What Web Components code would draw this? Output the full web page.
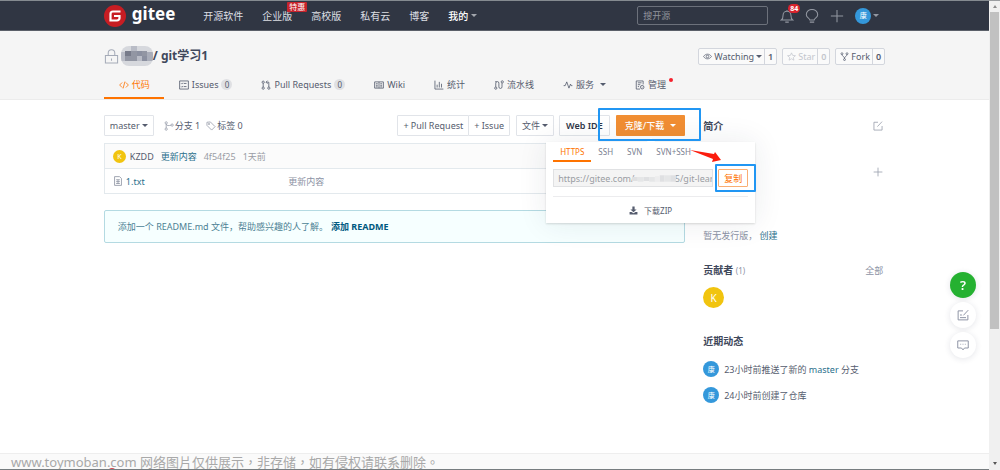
<!DOCTYPE html>
<html lang="zh-CN">
<head>
<meta charset="utf-8">
<meta name="viewport" content="width=device-width, initial-scale=1">
<title>git学习1 - Gitee</title>
<style>
  html, body { margin: 0; height: 100%; }
  body {
    font: 9px/13px "Noto Sans", "Noto Sans CJK SC", sans-serif;
    color: #555c6e;
    background: #fff;
    overflow: hidden;
  }
</style>
</head>
<body>
<gitee-app></gitee-app>
<script>
const RESET = `
  *, *::before, *::after { box-sizing: border-box; }
  :host([hidden]) { display: none; }
  a { color: inherit; text-decoration: none; }
  button, input { font: inherit; color: inherit; margin: 0; border-radius: 0; }
  button { cursor: pointer; }
  h1, h2, p, ul { margin: 0; padding: 0; font: inherit; }
  ul { list-style: none; }
`;

function define(name, css, html, setup) {
  const template = document.createElement('template');
  template.innerHTML = `<style>${RESET}${css}</style>${html}`;
  customElements.define(name, class extends HTMLElement {
    constructor() {
      super();
      this.attachShadow({ mode: 'open' }).append(template.content.cloneNode(true));
    }
    connectedCallback() { if (setup) setup(this, this.shadowRoot); }
  });
}

/* ---------- icons ---------- */
const ICONS = {
  lock: '<path d="M1.500 7h13v8h-13zM4.500 7V4.200a3.500 3.500 0 0 1 7 0V7M8 10v2.500"/>',
  code: '<path d="M5 4 1 8l4 4M11 4l4 4-4 4M9.500 2.500l-3 11"/>',
  issue: '<path d="M1 1.500h14v13H1zM7.500 5.500H12M7.500 10.500H12M3.500 5.500l1 1 1.500-2M3.500 10.500l1 1 1.500-2"/>',
  pull: '<circle cx="3.500" cy="3.500" r="1.800"/><circle cx="3.500" cy="13" r="1.800"/><circle cx="12.500" cy="13" r="1.800"/><path d="M3.500 5.300v5.900M12.500 11.200V3.500H8.500M10.500 1 8 3.500 10.500 6"/>',
  wiki: '<path d="M1 3h14v10H1zM8 3v10M3 6h3M3 8.500h3M10 6h3M10 8.500h3M3 11h3M10 11h3"/>',
  chart: '<path d="M1.500 1v13.500H15M5 12V7.500M8.500 12V3M12 12V6"/>',
  pipe: '<circle cx="2.800" cy="13" r="1.800"/><circle cx="13.200" cy="3" r="1.800"/><path d="M2.800 11V5a2.500 2.500 0 0 1 5 0v6a2.500 2.500 0 0 0 5 0V5M2 2.500h2"/>',
  pulse: '<path d="M1 9h2.500L6 3l3.500 10L12 6.500 13 9h2"/>',
  manage: '<path d="M13 7V1.500H2v13h6M4.500 4.500h6M4.500 7.500h4M4.500 10.500h2"/><circle cx="11.500" cy="11.500" r="2.800"/><path d="M11.500 11v1"/>',
  eye: '<path d="M1 8c3.500-5.500 10.500-5.500 14 0-3.500 5.500-10.500 5.500-14 0z"/><circle cx="8" cy="8" r="2.300"/>',
  star: '<path d="m8 1.500 2 4.500 5 .5-3.700 3.300 1 4.700L8 12l-4.300 2.500 1-4.700L1 6.500 6 6z"/>',
  fork: '<circle cx="3.500" cy="3" r="1.700"/><circle cx="12.500" cy="3" r="1.700"/><circle cx="8" cy="13.500" r="1.700"/><path d="M3.500 4.700C3.500 8 8 7 8 11.800M12.500 4.700C12.500 8 8 7 8 11.800"/>',
  branch: '<circle cx="3.500" cy="3" r="1.800"/><circle cx="3.500" cy="13" r="1.800"/><circle cx="13" cy="6.500" r="1.800"/><path d="M3.500 4.800v6.400M3.500 5c1 3 4 2.500 7.700 1.800"/>',
  tag: '<path d="M1.500 2v5l7.500 7.500 5.500-5.500L7 1.500z"/><circle cx="4.800" cy="4.800" r="1"/>',
  file: '<path d="M2.500 1h8l3 3v11h-11zM5 6h6M5 9h6M5 12h6M8 6v6"/>',
  bell: '<path d="M1.500 12.500c1.500-1 2-1.500 2-5.500a4.500 4.500 0 0 1 9 0c0 4 .5 4.500 2 5.500zM8 1v1.500M6 15h4"/>',
  bulb: '<path d="M5.500 12.500C5.500 10.500 1.500 10 1.500 6.500a6.500 6 0 0 1 13 0c0 3.500-4 4-4 6zM5.500 15h5"/>',
  plus: '<path d="M8 1v14M1 8h14"/>',
  edit: '<path d="M8 2H1.500v12.500h13V8M7 9l7.500-8"/>',
  note: '<path d="M8 2.500H1.500v12h13V8M8.500 8.500l6.500-7M4 8h2.500M4 11.500h8"/>',
  chat: '<path d="M1 2.500h14v9.500h-5l-2 2.500L6 12H1zM4.500 7h1M7.500 7h1M10.500 7h1"/>',
  download: '<path fill="currentColor" stroke="none" d="M6 1h4v5h3.500L8 11 2.500 6H6zM1 10.500h3.500L8 13l3.500-2.500H15V15H1z"/>'
};
define('ui-icon', `
  :host { display: inline-flex; flex: none; width: var(--size, 10px); height: var(--size, 10px); }
  svg { width: 100%; height: 100%; fill: none; stroke: currentColor; stroke-width: var(--stroke, 1.3); }
`, '<svg viewBox="0 0 16 16" aria-hidden="true"></svg>', (el, root) => {
  root.querySelector('svg').innerHTML = ICONS[el.getAttribute('name')];
});

define('ui-caret', `
  :host { display: inline-block; flex: none; border: 3px solid transparent; border-top-color: currentColor; border-bottom: 0; }
`, '');

define('user-avatar', `
  :host { display: inline-flex; flex: none; align-items: center; justify-content: center;
    width: var(--size, 16px); height: var(--size, 16px); border-radius: 50%;
    background: var(--tone, #3498db); color: #fff; font-size: var(--letter, 7px); line-height: 1; }
`, '<slot></slot>');

/* A blue frame drawn over whatever is slotted in. */
define('mark-frame', `
  :host { display: flex; position: relative; }
  i { position: absolute; inset: var(--reach, -4px); border: 2px solid #2196f3; border-radius: 1px; pointer-events: none; z-index: 6; }
`, '<slot></slot><i></i>');

/* ---------- top bar ---------- */
define('site-nav', `
  :host { display: block; background: #303643; border-top: 1px solid #858b90; border-bottom: 1px solid #5b6069; color: #ced1d6; }
  nav { display: flex; align-items: center; height: 29px; width: var(--wrap); margin: 0 auto; }
  .logo { display: flex; align-items: center; gap: 6px; color: #fff; font-weight: 700; font-size: 17px; line-height: 24px; margin-right: 28px; }
  .logo svg { width: 22px; height: 22px; }
  .logo span { padding-bottom: 3px; }
  ul { display: flex; gap: 19px; font-size: 10px; line-height: 16px; color: #dcdfe3; }
  li { position: relative; }
  .mine { display: flex; align-items: center; gap: 3px; font-weight: 500; color: #fff; }
  .mine ui-caret { color: #a3a7ae; }
  .hot { position: absolute; left: 25px; top: -6px; padding: 0 2px; background: #c7232c; color: #fff; font-size: 8px; line-height: 10px; border-radius: 1px; white-space: nowrap; }
  .tools { display: flex; align-items: center; margin-left: auto; margin-right: 6px; gap: 11px; color: #9297a1; }
  input { width: 131px; height: 19px; padding: 0 5px; background: transparent; border: 1px solid #6c717b; border-radius: 2px; color: #fff; margin-right: 1px; }
  input::placeholder { color: #90949c; opacity: 1; }
  .tools button, .tools a { display: flex; align-items: center; padding: 0; border: 0; background: none; position: relative; }
  .tools ui-icon { --size: 14px; --stroke: 1.2; }
  .tools .me { gap: 2px; }
  .count { position: absolute; left: 8px; top: -5px; padding: 0 2px; border-radius: 5px; background: #d9232d; color: #fff; font-size: 7px; line-height: 9px; font-weight: 700; }
`, `
  <nav>
    <a class="logo" href="#"><svg viewBox="0 0 22 22" aria-hidden="true"><circle cx="11" cy="11" r="11" fill="#c71d23"/><path d="M16.500 6.500H9a2.500 2.500 0 0 0-2.500 2.500v6.500H13a2.500 2.500 0 0 0 2.500-2.500v-2H10" fill="none" stroke="#fff" stroke-width="2.200"/></svg><span>gitee</span></a>
    <ul>
      <li><a href="#">开源软件</a></li>
      <li><a href="#">企业版</a><span class="hot">特惠</span></li>
      <li><a href="#">高校版</a></li>
      <li><a href="#">私有云</a></li>
      <li><a href="#">博客</a></li>
      <li><a class="mine" href="#">我的<ui-caret></ui-caret></a></li>
    </ul>
    <div class="tools">
      <input type="search" placeholder="搜开源" aria-label="搜开源">
      <a href="#" aria-label="通知"><ui-icon name="bell"></ui-icon><span class="count">84</span></a>
      <a href="#" aria-label="提示"><ui-icon name="bulb"></ui-icon></a>
      <button aria-label="新建"><ui-icon name="plus"></ui-icon></button>
      <button class="me" aria-label="账户"><user-avatar>康</user-avatar><ui-caret></ui-caret></button>
    </div>
  </nav>
`);

/* ---------- repository header ---------- */
define('stat-button', `
  :host { display: flex; height: 17px; background: #fafafa; border: 1px solid #d3d6dd; border-radius: 2px; }
  :host([muted]) { color: #c3c6cd; }
  button { display: flex; align-items: center; gap: 2px; padding: 0 2px 0 4px; border: 0; background: none; }
  a { display: flex; align-items: center; padding: 0 3px; border-left: 1px solid #d3d6dd; font-weight: 600; }
  ui-icon { --size: 9px; }
`, '<button><ui-icon></ui-icon><slot></slot></button><a href="#"></a>', (el, root) => {
  const icon = document.createElement('ui-icon');
  icon.setAttribute('name', el.getAttribute('icon'));
  root.querySelector('ui-icon').replaceWith(icon);
  root.querySelector('a').textContent = el.getAttribute('count');
  root.querySelector('button').disabled = el.hasAttribute('muted');
}
);

define('repo-tab', `
  :host { display: block; }
  a { display: flex; align-items: center; gap: 3px; height: 30px; padding: 3px 14px 0 15px; border-bottom: 2px solid transparent; white-space: nowrap; }
  :host([active]) a { color: #fe7300; border-color: #fe7300; }
  b { min-width: 11px; padding: 0 3px; border-radius: 6px; background: #dfe0e3; font-weight: 400; font-size: 8px; line-height: 11px; text-align: center; }
  ui-caret { margin-left: 3px; }
  i { width: 4px; height: 4px; border-radius: 50%; background: #f5222d; align-self: flex-start; margin-top: 6px; }
`, '<a href="#"></a>', (el, root) => {
  const extra = { caret: '<ui-caret></ui-caret>', dot: '<i></i>' }[el.getAttribute('extra')] || '';
  const count = el.hasAttribute('count') ? `<b>${el.getAttribute('count')}</b>` : '';
  root.querySelector('a').innerHTML = `<ui-icon name="${el.getAttribute('icon')}"></ui-icon><slot></slot>${count}${extra}`;
});

define('repo-header', `
  :host { display: block; background: #f5f5f5; border-bottom: 1px solid #ececec; }
  .wrap { width: var(--wrap); margin: 0 auto; padding-top: 15px; }
  .title { display: flex; align-items: center; height: 20px; }
  h1 { display: flex; align-items: center; font-size: 12px; line-height: 20px; font-weight: 700; color: #40485b; }
  h1 ui-icon { --size: 15px; --stroke: 1.1; color: #a5abb8; margin-right: 2px; }
  h1 svg { width: 32px; height: 20px; }
  .stats { display: flex; gap: 5px; margin-left: auto; }
  .tabs { display: flex; margin-top: 3px; }
`, `
  <div class="wrap">
    <div class="title">
      <h1><ui-icon name="lock"></ui-icon>
        <svg viewBox="0 0 32 20" aria-hidden="true">
          <clipPath id="blob"><rect width="32" height="20" rx="8"/></clipPath>
          <g clip-path="url(#blob)"><rect width="32" height="20" fill="#d6d8dd"/>
          <path fill="#b9bcc6" d="M0 6h5v9H0zM10 0h6v5h-6zM16 10h5v5h-5z"/><path fill="#777b8a" d="M4 5h6v5H4z"/><path fill="#9296a3" d="M10 5h6v10h-6zM4 10h6v5H4zM21 5h5v5h-5z"/><path fill="#8b90a0" d="M16 5h5v5h-5zM21 10h5v5h-5z"/><path fill="#a9adb9" d="M26 6h6v9h-6z"/></g>
        </svg>/ git学习1</h1>
      <div class="stats">
        <stat-button icon="eye" count="1">Watching<ui-caret></ui-caret></stat-button>
        <stat-button icon="star" count="0" muted>Star</stat-button>
        <stat-button icon="fork" count="0">Fork</stat-button>
      </div>
    </div>
    <nav class="tabs">
      <repo-tab icon="code" active>代码</repo-tab>
      <repo-tab icon="issue" count="0">Issues</repo-tab>
      <repo-tab icon="pull" count="0">Pull Requests</repo-tab>
      <repo-tab icon="wiki">Wiki</repo-tab>
      <repo-tab icon="chart">统计</repo-tab>
      <repo-tab icon="pipe">流水线</repo-tab>
      <repo-tab icon="pulse" extra="caret">服务</repo-tab>
      <repo-tab icon="manage" extra="dot">管理</repo-tab>
    </nav>
  </div>
`);

/* ---------- clone drop-down ---------- */
define('clone-menu', `
  :host { display: block; position: relative; }
  .open { display: flex; align-items: center; gap: 6px; height: 21px; padding: 0 9px; border: 0; border-radius: 1px; background: #f18e33; color: #fff; font-weight: 500; }
  mark-frame.big { --reach: -7px -16px -5px -18px; }
  .panel { position: absolute; z-index: 4; top: 27px; right: -70px; width: 209px; padding: 0 7px; background: #fff; box-shadow: 0 1px 2px rgba(0,0,0,.14), 0 0 30px rgba(30,40,70,.09); }
  .panel::before { content: ""; position: absolute; top: -3px; left: 102px; width: 6px; height: 6px; background: #fff; transform: rotate(45deg); }
  .kinds { display: flex; height: 19px; font-size: 8px; line-height: 20px; color: #7a8090; }
  .kinds a { padding: 0 7px; height: 20px; border-bottom: 2px solid transparent; }
  .kinds .on { color: #fe7300; border-color: #fe7300; }
  .url { display: flex; gap: 5px; padding: 8px 0 9px; position: relative; border-bottom: 1px solid #ececee; }
  .field { flex: 1; min-width: 0; position: relative; }
  input { width: 100%; height: 18px; display: block; padding: 0 0 0 4px; border: 1px solid #e0e1e3; background: #f4f4f4; color: #9a9da3; }
  .smudge { position: absolute; left: 79px; top: 4px; width: 44px; height: 11px; }
  .copy { height: 18px; width: 30px; padding: 0; border: 1px solid #f9ae74; border-radius: 1px; background: #fff; color: #fe7300; }
  mark-frame.small { --reach: -5px -8px -5px -3px; }
  .arrow { position: absolute; left: 137px; top: -11px; width: 31px; height: 12px; z-index: 7; }
  .zip { display: flex; align-items: center; justify-content: center; gap: 6px; height: 26px; font-size: 8px; }
  .zip ui-icon { --size: 9px; }
`, `
  <mark-frame class="big"><button class="open" aria-expanded="true">克隆/下载<ui-caret></ui-caret></button></mark-frame>
  <div class="panel">
    <nav class="kinds"><a class="on" href="#">HTTPS</a><a href="#">SSH</a><a href="#">SVN</a><a href="#">SVN+SSH</a></nav>
    <div class="url">
      <div class="field">
        <input readonly aria-label="仓库地址" value="https://gitee.com/&#8195;&#8195;&#8195;&#8195;&#8194;5/git-learn">
        <svg class="smudge" viewBox="0 0 46 11" aria-hidden="true"><path fill="#dfe0e2" d="M0 4h6v4H0zM12 4h6v4h-6zM29 2h5v7h-5zM40 2h6v7h-6z"/><path fill="#e5e6e7" d="M6 4h6v5H6zM18 4h6v5h-6zM34 2h6v7h-6z"/><path fill="#ededee" d="M24 3h5v6h-5z"/></svg>
      </div>
      <mark-frame class="small"><button class="copy">复制</button></mark-frame>
      <svg class="arrow" viewBox="0 0 31 12" aria-hidden="true"><path fill="#fb1d0e" d="M0 0 24 4l1-2 6 8-9 2 1-3z"/></svg>
    </div>
    <a class="zip" href="#"><ui-icon name="download"></ui-icon>下载ZIP</a>
  </div>
`);

/* ---------- code column ---------- */
define('repo-toolbar', `
  :host { display: flex; align-items: center; height: 21px; gap: 6px; }
  button { display: flex; align-items: center; gap: 2px; height: 21px; padding: 0 5px; background: #fff; border: 1px solid #e1e4e9; border-radius: 1px; white-space: nowrap; }
  button + button { margin-left: -1px; }
  a { display: flex; align-items: center; gap: 1px; }
  .refs { display: flex; gap: 6px; margin: 0 auto 0 4px; }
  .refs ui-icon { color: #9a9fac; }
  .pair { display: flex; }
  .ide { font-weight: 600; color: #2e3547; padding: 0 6px; }
`, `
  <button>master<ui-caret></ui-caret></button>
  <div class="refs"><a href="#"><ui-icon name="branch"></ui-icon>分支 1</a><a href="#"><ui-icon name="tag"></ui-icon>标签 0</a></div>
  <div class="pair"><button>+ Pull Request</button><button>+ Issue</button></div>
  <button>文件<ui-caret></ui-caret></button>
  <button class="ide">Web IDE</button>
  <clone-menu></clone-menu>
`);

define('file-list', `
  :host { display: block; }
  table { width: 100%; border-collapse: collapse; border: 1px solid #e3e9ed; table-layout: fixed; }
  th, td { height: 25px; padding: 0 0 0 8px; text-align: left; font-weight: 400; }
  thead { background: #fbfbfb; border-bottom: 1px solid #e3e9ed; }
  div { display: flex; align-items: center; }
  .last { gap: 7px; color: #9a9da5; }
  .author { display: flex; align-items: center; gap: 4px; color: #555c6e; }
  .link { color: #2a6f8c; }
  .name { gap: 3px; color: #2a6f8c; }
  .name ui-icon { color: #8d93a1; }
  td + td { color: #8c92a4; padding: 0; }
`, `
  <table>
    <colgroup><col style="width: 184px"><col></colgroup>
    <thead><tr><th colspan="2"><div class="last"><a class="author" href="#"><user-avatar style="--size: 13px; --tone: #f1c40f">K</user-avatar>KZDD</a><a class="link" href="#">更新内容</a><a href="#">4f54f25</a><span>1天前</span></div></th></tr></thead>
    <tbody><tr><td><div class="name"><ui-icon name="file"></ui-icon><a href="#">1.txt</a></div></td><td>更新内容</td></tr></tbody>
  </table>
`);

define('readme-tip', `
  :host { display: block; padding: 9px 13px; background: #f6ffff; border: 1px solid #b4dae2; border-radius: 2px; color: #4c7f94; }
  a { color: #005980; font-weight: 700; margin-left: 3px; }
`, '<p>添加一个 README.md 文件，帮助感兴趣的人了解。<a href="#">添加 README</a></p>');

/* ---------- sidebar ---------- */
define('side-section', `
  :host { display: block; }
  header { display: flex; align-items: center; justify-content: space-between; height: 18px; }
  h2 { font-size: 10px; line-height: 18px; font-weight: 700; color: #40485b; }
`, '<header><h2><slot name="title"></slot></h2><slot name="action"></slot></header><slot></slot>');

define('repo-sidebar', `
  :host { display: block; padding-top: 2px; }
  .muted { color: #8c92a4; }
  small { font-size: 8px; font-weight: 400; color: #8c92a4; }
  .add { display: flex; justify-content: flex-end; margin-top: 32px; }
  .icon { display: flex; padding: 0; border: 0; background: none; color: #9a9fac; }
  .icon, .muted { margin-right: 2px; }
  .release { margin-top: 52px; color: #8c92a4; }
  .release a, .feed a { color: #2a6f8c; }
  .people { margin-top: 19px; }
  .people user-avatar { --size: 21px; --tone: #f1c40f; --letter: 10px; margin-top: 8px; }
  .recent { margin-top: 24px; }
  .feed { padding-top: 11px; display: grid; gap: 10px; }
  .feed li { display: flex; align-items: center; gap: 5px; height: 16px; white-space: pre; }
`, `
  <side-section><span slot="title">简介</span><button class="icon" slot="action" aria-label="编辑"><ui-icon name="edit"></ui-icon></button>
    <div class="add"><button class="icon" aria-label="添加"><ui-icon name="plus"></ui-icon></button></div>
    <p class="release">暂无发行版， <a href="#">创建</a></p>
  </side-section>
  <side-section class="people"><span slot="title">贡献者 <small>(1)</small></span><a class="muted" slot="action" href="#">全部</a><user-avatar>K</user-avatar></side-section>
  <side-section class="recent"><span slot="title">近期动态</span>
    <ul class="feed">
      <li><user-avatar>康</user-avatar><span>23小时前推送了新的 <a href="#">master</a> 分支</span></li>
      <li><user-avatar>康</user-avatar><span>24小时前创建了仓库</span></li>
    </ul>
  </side-section>
`);

/* ---------- floating buttons, scroll track, footer ---------- */
define('help-dock', `
  :host { position: fixed; right: 24px; bottom: 112px; display: grid; gap: 4px; z-index: 8; }
  button { display: flex; align-items: center; justify-content: center; width: 26px; height: 26px; padding: 0; border: 0; border-radius: 50%; background: #fff; color: #8c92a4; box-shadow: 0 1px 6px rgba(30,40,70,.12); }
  .help { background: #25b131; color: #fff; font-size: 13px; font-weight: 600; }
  ui-icon { --size: 12px; --stroke: 1.3; }
`, `<button class="help">?</button><button aria-label="记录"><ui-icon name="note"></ui-icon></button><button aria-label="反馈"><ui-icon name="chat"></ui-icon></button>`);

define('scroll-track', `
  :host { display: flex; flex-direction: column; align-items: center; width: 11px; background: #f0f0f0; border-top: 1px solid #9a9da0; padding: 4px 0 5px; }
  i { border: 2px solid transparent; }
  .up { border-bottom: 3px solid #8d8d8d; border-top: 0; }
  .down { border-top: 3px solid #555; border-bottom: 0; }
  .rail { flex: 1; width: 9px; margin: 4px 0; }
  .thumb { height: 71%; background: #c1c1c1; }
`, '<i class="up"></i><div class="rail"><div class="thumb"></div></div><i class="down"></i>');

define('page-footer', `
  :host { display: block; height: 17px; overflow: hidden; position: relative; background: #fafafa; border-top: 1px solid #eee; border-bottom: 1px solid #777d80; }
  p { padding-left: 11px; font: 13px/16px "Noto Sans", "Noto Sans CJK TC", sans-serif; color: #a9a9a9; white-space: nowrap; }
  i { position: absolute; left: 107px; top: 14px; width: 10px; height: 10px; border-radius: 50%; background: #d8434a; }
`, '<i></i><p lang="zh-TW">www.toymoban.com 网络图片仅供展示，非存储，如有侵权请联系删除。</p>');

define('gitee-app', `
  :host { display: flex; height: 100vh; --wrap: 79%; }
  .page { flex: 1; min-width: 0; display: flex; flex-direction: column; }
  main { flex: 1; display: grid; grid-template-columns: minmax(0, 1fr) 182px; gap: 18px; width: var(--wrap); margin: 0 auto; padding-top: 15px; align-content: start; }
  .code { display: flex; flex-direction: column; }
  file-list { margin-top: 7px; }
  readme-tip { margin-top: 16px; }
`, `
  <div class="page">
    <site-nav></site-nav>
    <repo-header></repo-header>
    <main>
      <div class="code"><repo-toolbar></repo-toolbar><file-list></file-list><readme-tip></readme-tip></div>
      <repo-sidebar></repo-sidebar>
    </main>
    <page-footer></page-footer>
  </div>
  <scroll-track></scroll-track>
  <help-dock></help-dock>
`);
</script>
</body>
</html>
